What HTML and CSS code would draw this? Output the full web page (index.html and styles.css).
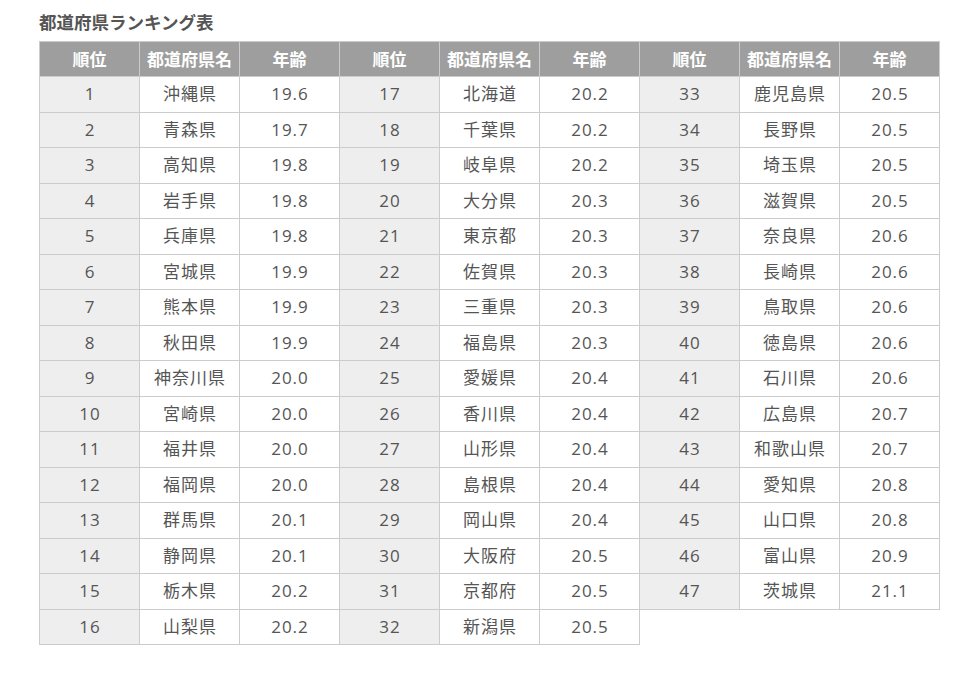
FILE: index.html
```html
<!DOCTYPE html>
<html lang="ja">
<head>
<meta charset="utf-8">
<link rel="stylesheet" href="styles.css">
</head>
<body>
<h3 class="title">都道府県ランキング表</h3>
<div class="tables">
<table class="rank">
<tr><th>順位</th><th>都道府県名</th><th>年齢</th></tr>
<tr><td class="no">1</td><td>沖縄県</td><td>19.6</td></tr>
<tr><td class="no">2</td><td>青森県</td><td>19.7</td></tr>
<tr><td class="no">3</td><td>高知県</td><td>19.8</td></tr>
<tr><td class="no">4</td><td>岩手県</td><td>19.8</td></tr>
<tr><td class="no">5</td><td>兵庫県</td><td>19.8</td></tr>
<tr><td class="no">6</td><td>宮城県</td><td>19.9</td></tr>
<tr><td class="no">7</td><td>熊本県</td><td>19.9</td></tr>
<tr><td class="no">8</td><td>秋田県</td><td>19.9</td></tr>
<tr><td class="no">9</td><td>神奈川県</td><td>20.0</td></tr>
<tr><td class="no">10</td><td>宮崎県</td><td>20.0</td></tr>
<tr><td class="no">11</td><td>福井県</td><td>20.0</td></tr>
<tr><td class="no">12</td><td>福岡県</td><td>20.0</td></tr>
<tr><td class="no">13</td><td>群馬県</td><td>20.1</td></tr>
<tr><td class="no">14</td><td>静岡県</td><td>20.1</td></tr>
<tr><td class="no">15</td><td>栃木県</td><td>20.2</td></tr>
<tr><td class="no">16</td><td>山梨県</td><td>20.2</td></tr>
</table>
<table class="rank">
<tr><th>順位</th><th>都道府県名</th><th>年齢</th></tr>
<tr><td class="no">17</td><td>北海道</td><td>20.2</td></tr>
<tr><td class="no">18</td><td>千葉県</td><td>20.2</td></tr>
<tr><td class="no">19</td><td>岐阜県</td><td>20.2</td></tr>
<tr><td class="no">20</td><td>大分県</td><td>20.3</td></tr>
<tr><td class="no">21</td><td>東京都</td><td>20.3</td></tr>
<tr><td class="no">22</td><td>佐賀県</td><td>20.3</td></tr>
<tr><td class="no">23</td><td>三重県</td><td>20.3</td></tr>
<tr><td class="no">24</td><td>福島県</td><td>20.3</td></tr>
<tr><td class="no">25</td><td>愛媛県</td><td>20.4</td></tr>
<tr><td class="no">26</td><td>香川県</td><td>20.4</td></tr>
<tr><td class="no">27</td><td>山形県</td><td>20.4</td></tr>
<tr><td class="no">28</td><td>島根県</td><td>20.4</td></tr>
<tr><td class="no">29</td><td>岡山県</td><td>20.4</td></tr>
<tr><td class="no">30</td><td>大阪府</td><td>20.5</td></tr>
<tr><td class="no">31</td><td>京都府</td><td>20.5</td></tr>
<tr><td class="no">32</td><td>新潟県</td><td>20.5</td></tr>
</table>
<table class="rank">
<tr><th>順位</th><th>都道府県名</th><th>年齢</th></tr>
<tr><td class="no">33</td><td>鹿児島県</td><td>20.5</td></tr>
<tr><td class="no">34</td><td>長野県</td><td>20.5</td></tr>
<tr><td class="no">35</td><td>埼玉県</td><td>20.5</td></tr>
<tr><td class="no">36</td><td>滋賀県</td><td>20.5</td></tr>
<tr><td class="no">37</td><td>奈良県</td><td>20.6</td></tr>
<tr><td class="no">38</td><td>長崎県</td><td>20.6</td></tr>
<tr><td class="no">39</td><td>鳥取県</td><td>20.6</td></tr>
<tr><td class="no">40</td><td>徳島県</td><td>20.6</td></tr>
<tr><td class="no">41</td><td>石川県</td><td>20.6</td></tr>
<tr><td class="no">42</td><td>広島県</td><td>20.7</td></tr>
<tr><td class="no">43</td><td>和歌山県</td><td>20.7</td></tr>
<tr><td class="no">44</td><td>愛知県</td><td>20.8</td></tr>
<tr><td class="no">45</td><td>山口県</td><td>20.8</td></tr>
<tr><td class="no">46</td><td>富山県</td><td>20.9</td></tr>
<tr><td class="no">47</td><td>茨城県</td><td>21.1</td></tr>
</table>
</div>
</body>
</html>
```
FILE: styles.css
```css
body {
  margin: 0;
  padding: 0 0 0 39px;
  background: #fff;
  color: #555;
  font-family: "Open Sans", "Noto Sans CJK JP", sans-serif;
}
.title {
  margin: 0;
  padding-top: 12px;
  height: 41px;
  box-sizing: border-box;
  font-size: 17.5px;
  line-height: 20px;
  font-weight: bold;
  color: #555;
  font-family: "Noto Sans CJK JP", sans-serif;
}
.tables {
  display: flex;
  align-items: flex-start;
}
.rank {
  border-collapse: collapse;
  width: 301px;
  table-layout: fixed;
  margin-right: -1px;
}
.rank th,
.rank td {
  border: 1px solid #ccc;
  text-align: center;
  padding: 0;
  font-size: 17px;
  line-height: 20px;
}
.rank th {
  background: #9e9e9e;
  color: #fff;
  font-weight: bold;
  height: 34px;
  font-family: "Noto Sans CJK JP", sans-serif;
}
.rank td {
  height: 34.5px;
  color: #555;
  font-weight: normal;
  letter-spacing: 1px;
  text-indent: 1px;
}
.rank td.no {
  background: #eee;
}
```
